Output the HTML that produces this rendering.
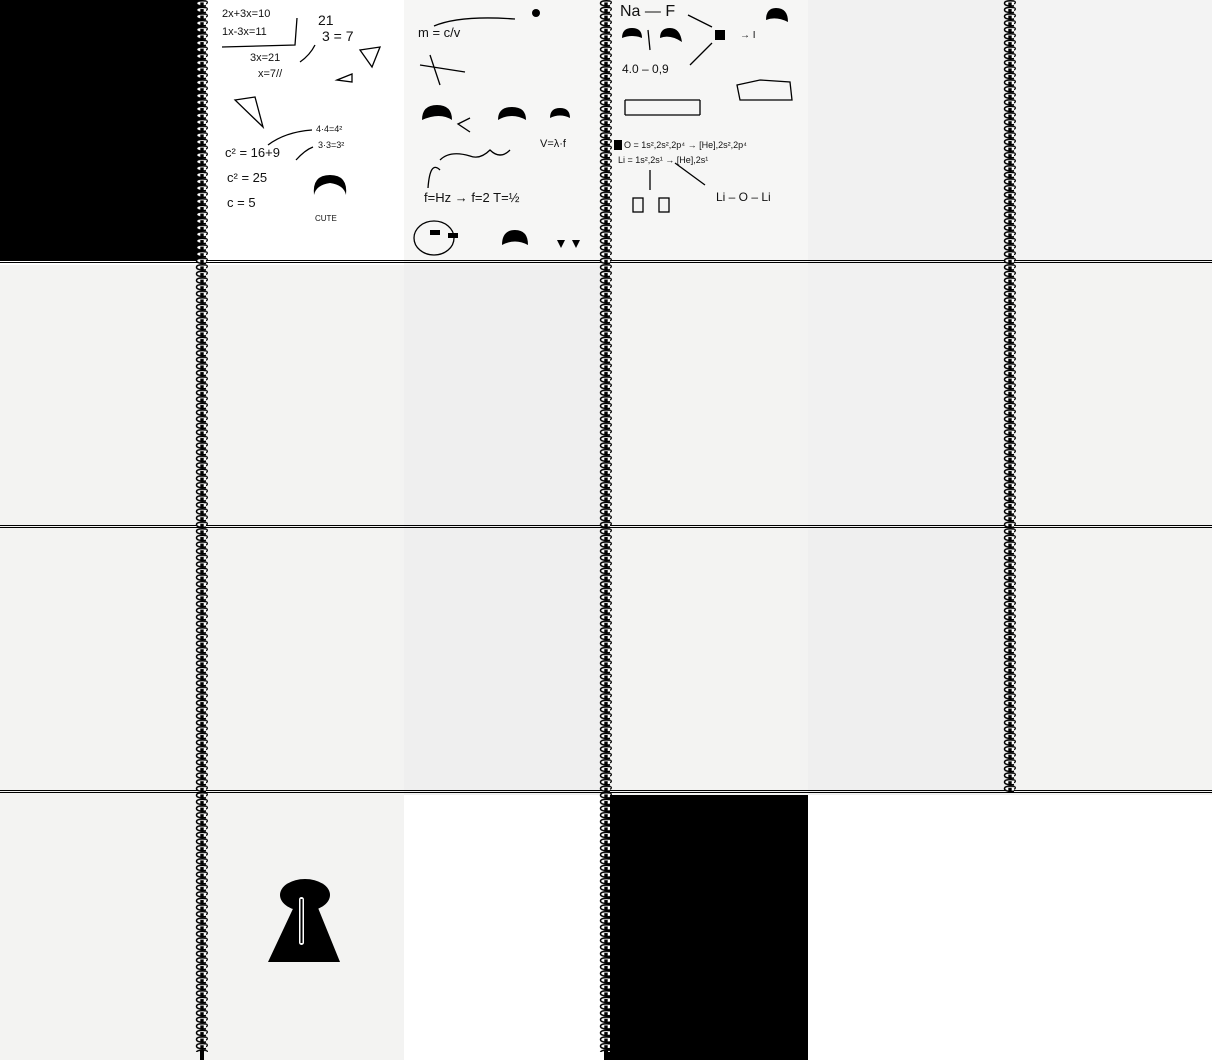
<!DOCTYPE html>
<html><head><meta charset="utf-8"><style>
*{margin:0;padding:0}
body{width:1212px;height:1060px;position:relative;background:#fff;overflow:hidden;font-family:"Liberation Sans",sans-serif}
.c{position:absolute;width:202px;height:265px;background:#f3f3f2}
.t{position:absolute;font-family:"Liberation Sans",sans-serif;color:#111;white-space:nowrap;font-size:13px}
.h{position:absolute;left:0;width:1212px;height:1px;background:#000}
</style></head><body>
<div class="c" style="left:0;top:0;background:#000;height:260px"></div>
<div class="c" style="left:202px;top:0;background:#fff"></div>
<div class="c" style="left:404px;top:0;background:#f6f6f5"></div>
<div class="c" style="left:606px;top:0;background:#f6f6f5"></div>
<div class="c" style="left:808px;top:0;background:#f1f1f1"></div>
<div class="c" style="left:1010px;top:0;background:#f3f3f3"></div>

<div class="c" style="left:0;top:265px"></div><div class="c" style="left:202px;top:265px"></div><div class="c" style="left:404px;top:265px;background:#efefef"></div><div class="c" style="left:606px;top:265px"></div><div class="c" style="left:808px;top:265px;background:#f1f1f1"></div><div class="c" style="left:1010px;top:265px"></div>
<div class="c" style="left:0;top:530px"></div><div class="c" style="left:202px;top:530px"></div><div class="c" style="left:404px;top:530px;background:#efefef"></div><div class="c" style="left:606px;top:530px"></div><div class="c" style="left:808px;top:530px;background:#efefef"></div><div class="c" style="left:1010px;top:530px"></div>
<div class="c" style="left:0;top:795px"></div><div class="c" style="left:202px;top:795px"></div><div class="c" style="left:404px;top:795px;background:#fff"></div><div class="c" style="left:606px;top:795px;background:#000"></div><div class="c" style="left:808px;top:795px;background:#fff"></div><div class="c" style="left:1010px;top:795px;background:#fff"></div>

<div class="h" style="top:260px"></div><div class="h" style="top:262px"></div>
<div class="h" style="top:525px"></div><div class="h" style="top:527px"></div>
<div class="h" style="top:790px"></div><div class="h" style="top:792px"></div>

<svg width="1212" height="1060" style="position:absolute;left:0;top:0">
<defs>
<g id="ring">
<path d="M11 5.7 C 7 6.3 1.5 5.8 1.5 3.3 C 1.5 0.9 6 0.4 11 1" fill="#fff" stroke="#000" stroke-width="1.5"/>
<path d="M11 1 C 12.8 1.4 12.8 3.4 11 3.8" fill="none" stroke="#000" stroke-width="1.2"/>
<rect x="5.3" y="2.4" width="3.4" height="4.3" fill="#000"/>
</g>
<pattern id="r1" x="195" y="0" width="14" height="6.6" patternUnits="userSpaceOnUse"><use href="#ring"/></pattern>
<pattern id="r2" x="599" y="0" width="14" height="6.6" patternUnits="userSpaceOnUse"><use href="#ring"/></pattern>
<pattern id="r3" x="1003" y="0" width="14" height="6.6" patternUnits="userSpaceOnUse"><use href="#ring"/></pattern>
</defs>
<rect x="195" y="0" width="14" height="1052" fill="url(#r1)"/>
<rect x="599" y="0" width="14" height="1052" fill="url(#r2)"/>
<rect x="1003" y="0" width="14" height="792" fill="url(#r3)"/>
<rect x="200" y="1050" width="4" height="10" fill="#000"/>
<rect x="604" y="1050" width="4" height="10" fill="#000"/>
<!-- keyhole -->
<ellipse cx="305" cy="895" rx="25" ry="16" fill="#000"/>
<polygon points="298,898 314,898 340,962 268,962" fill="#000"/>
<rect x="299" y="897" width="5" height="48" rx="2.5" fill="#fff"/>
<rect x="300.5" y="899" width="2" height="44" fill="#000"/>
<g fill="none" stroke="#000" stroke-width="1.3">
<path d="M297 18 L295 45 L222 47"/>
<path d="M300 62 Q310 55 315 45"/>
<path d="M360 50 L380 47 L372 67 Z"/><path d="M337 80 L352 74 L352 82 Z"/>
<path d="M235 100 L255 97 L263 127 Z"/>
<path d="M268 145 Q285 132 312 130"/><path d="M296 160 Q305 150 313 147"/>
<path d="M434 26 Q460 15 515 19"/><path d="M420 65 L465 72 M430 55 L440 85"/>
<path d="M470 118 L458 124 L470 132"/><path d="M428 188 Q430 160 440 170"/>
<path d="M440 160 Q450 150 470 156 Q480 160 490 150 Q500 160 510 150"/>
<path d="M648 30 L650 50 M688 15 L712 27 M690 65 L712 43"/>
<path d="M625 100 L700 100 M625 115 L700 115 M625 100 L625 115 M700 100 L700 115"/>
<path d="M737 85 L760 80 L790 82 L792 100 L740 100 Z"/>
<path d="M650 170 L650 190 M675 163 L705 185"/>
<rect x="633" y="198" width="10" height="14"/><rect x="659" y="198" width="10" height="14"/>
<ellipse cx="434" cy="238" rx="20" ry="17"/>
</g>
<g fill="#000">
<path d="M314 195 Q312 175 330 175 Q348 175 346 195 Q344 185 330 183 Q316 185 314 195Z"/>
<path d="M422 120 Q422 105 437 105 Q452 105 452 120 Q440 112 422 120Z"/>
<path d="M498 120 Q498 107 512 107 Q526 107 526 120 Q512 112 498 120Z"/>
<path d="M550 118 Q550 108 560 108 Q570 108 570 118 Q560 113 550 118Z"/>
<path d="M502 245 Q502 230 515 230 Q528 230 528 245 Q515 238 502 245Z"/>
<path d="M622 38 Q622 28 632 28 Q642 28 642 38 Q632 34 622 38Z"/>
<path d="M660 38 Q660 28 670 28 Q680 28 682 42 Q670 34 660 38Z"/>
<path d="M766 20 Q766 8 776 8 Q788 8 788 22 Q776 16 766 20Z"/>
<rect x="715" y="30" width="10" height="10"/><rect x="614" y="140" width="8" height="10"/>
<rect x="430" y="230" width="10" height="5"/><rect x="448" y="233" width="10" height="5"/>
<path d="M557 240 L565 240 L561 248Z M572 240 L580 240 L576 248Z"/>
<circle cx="536" cy="13" r="4"/>
</g>
</svg>
<div class="t" style="left:222px;top:8px;font-size:11px">2x+3x=10</div>
<div class="t" style="left:222px;top:26px;font-size:11px">1x-3x=11</div>
<div class="t" style="left:318px;top:12px;font-size:14px">21</div>
<div class="t" style="left:322px;top:28px;font-size:14px">3 = 7</div>
<div class="t" style="left:250px;top:52px;font-size:11px">3x=21</div>
<div class="t" style="left:258px;top:68px;font-size:11px">x=7//</div>
<div class="t" style="left:316px;top:124px;font-size:9px">4·4=4²</div>
<div class="t" style="left:318px;top:140px;font-size:9px">3·3=3²</div>
<div class="t" style="left:225px;top:145px;font-size:13px">c² = 16+9</div>
<div class="t" style="left:227px;top:170px;font-size:13px">c² = 25</div>
<div class="t" style="left:227px;top:195px;font-size:13px">c = 5</div>
<div class="t" style="left:315px;top:214px;font-size:8px">CUTE</div>
<div class="t" style="left:418px;top:25px;font-size:13px">m = c/v</div>
<div class="t" style="left:540px;top:138px;font-size:11px">V=λ·f</div>
<div class="t" style="left:424px;top:190px;font-size:13px">f=Hz → f=2 T=½</div>
<div class="t" style="left:620px;top:3px;font-size:16px">Na — F</div>
<div class="t" style="left:622px;top:62px;font-size:12px">4.0 – 0,9</div>
<div class="t" style="left:740px;top:30px;font-size:10px">→ I</div>
<div class="t" style="left:624px;top:140px;font-size:9px">O = 1s²,2s²,2p⁴ → [He],2s²,2p⁴</div>
<div class="t" style="left:618px;top:155px;font-size:9px">Li = 1s²,2s¹ → [He],2s¹</div>
<div class="t" style="left:716px;top:190px;font-size:12px">Li – O – Li</div>
</body></html>
